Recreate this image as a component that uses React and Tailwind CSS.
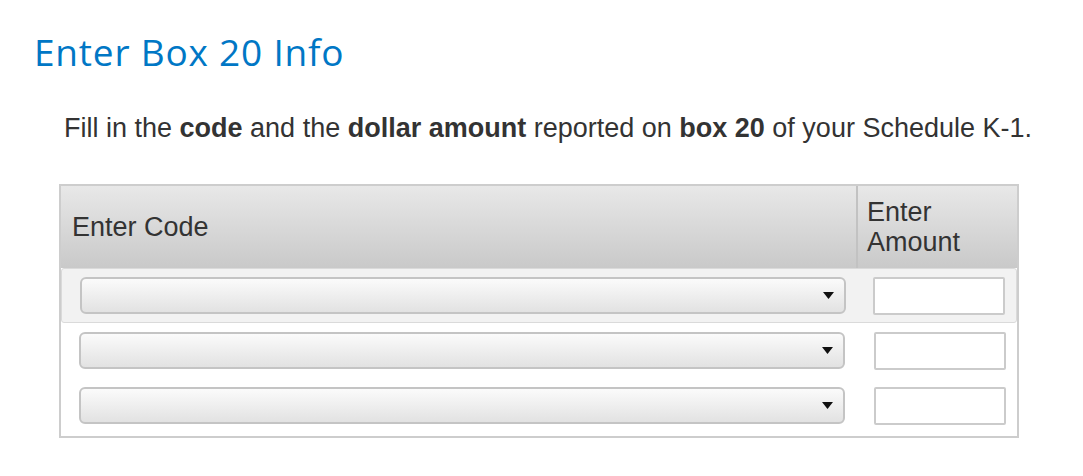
const rows = [0, 1, 2];

const CodeSelect = () => (
  <div className="relative w-[766px] h-[37px]">
    <select className="w-full h-full appearance-none rounded-[6px] border-2 border-[#c4c4c4] bg-gradient-to-b from-[#fbfbfb] to-[#e2e2e2] outline-none">
      <option value=""></option>
    </select>
    <svg className="absolute right-[12px] top-[15px] pointer-events-none" width="11" height="7" viewBox="0 0 11 7">
      <path d="M0 0 L11 0 L5.5 7 Z" fill="#111" />
    </svg>
  </div>
);

export default function App() {
  return (
    <div className="min-h-screen bg-white" style={{ fontFamily: '"Liberation Sans", Arial, sans-serif' }}>
      <h1 className="pt-[30px] pl-[34px] text-[37px] leading-[44px] tracking-[0.8px] font-medium text-[#0077c5]" style={{ fontFamily: '"Open Sans", sans-serif' }}>
        Enter Box 20 Info
      </h1>

      <p className="mt-[38px] pl-[64px] text-[27px] leading-[32px] text-[#333]">
        Fill in the <b>code</b> and the <b>dollar amount</b> reported on <b>box 20</b> of your Schedule K-1.
      </p>

      <div className="mt-[40px] ml-[59px] w-[960px] border-2 border-[#cdcdcd]">
        <div className="flex h-[82px] bg-gradient-to-b from-[#e8e8e8] to-[#c9c9c9] text-[27px] leading-[30px] text-[#333]">
          <div className="w-[795px] flex items-center pl-[11px]">Enter Code</div>
          <div className="w-[161px] border-l-2 border-[#c2c2c2] pl-[9px] pt-[11px]">
            Enter<br />Amount
          </div>
        </div>

        {rows.map((r) => (
          <div
            key={r}
            className={
              r === 0
                ? 'flex items-center h-[55px] bg-[#f2f2f2] border border-[#dadada] rounded-[3px]'
                : 'flex items-center h-[55px]'
            }
          >
            <div className="w-[795px] pl-[18px]">
              <CodeSelect />
            </div>
            <div className="w-[161px] pl-[18px]">
              <input type="text" className="w-[132px] h-[38px] border-2 border-[#cbcbcb] rounded-[2px] bg-white outline-none" />
            </div>
          </div>
        ))}
        <div className="h-[3px]" />
      </div>
    </div>
  );
}
